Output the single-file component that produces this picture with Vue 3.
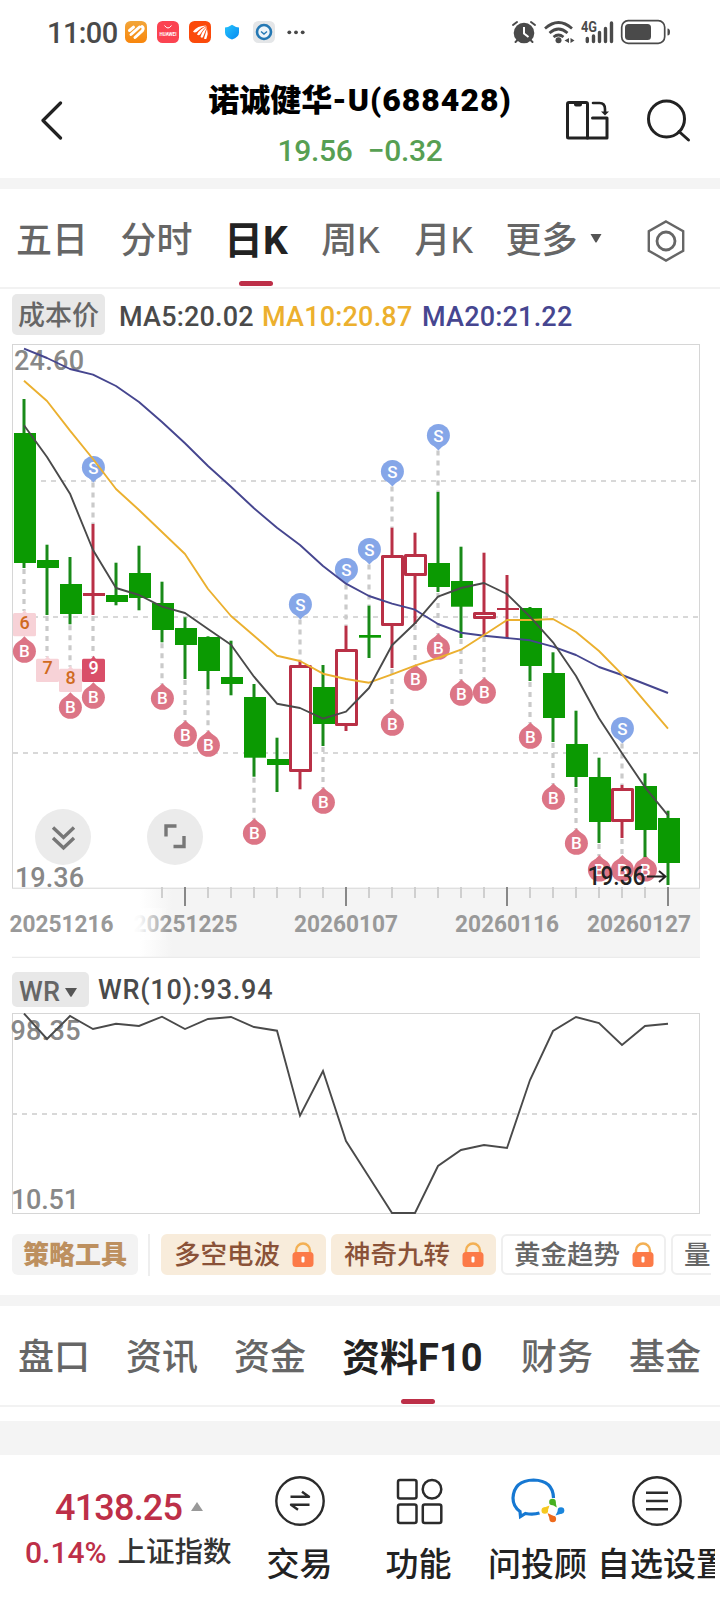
<script setup>
const xAt = (i) => 24 + 23 * i

// kind, high, body top, body bottom, low
const candles = [
  ['g', 399, 433, 563, 568], ['g', 544.7, 560, 568, 615], ['g', 557, 584, 614, 624.3],
  ['c', 524, 593, 596, 615], ['g', 562.7, 595, 602, 605.3], ['g', 545.7, 573, 598, 610.3],
  ['g', 581.7, 603, 630, 642.3], ['g', 617.3, 628, 645, 679], ['g', 636.3, 637, 671, 689.3],
  ['g', 640.7, 677, 684, 695.3], ['g', 684, 697, 757.7, 776.7], ['g', 737.7, 759, 765, 792],
  ['r', 661, 665, 772, 789.3], ['g', 665, 687, 724, 746], ['r', 625.7, 649, 726, 731],
  ['g', 605.7, 635, 637.7, 658], ['r', 527.7, 555, 626, 668], ['r', 532.7, 554, 576, 624],
  ['g', 492, 563, 587, 592], ['g', 546.7, 581, 606.7, 638], ['r', 552.7, 612, 619, 636],
  ['c', 575, 608, 610, 638], ['g', 607, 608, 666, 681], ['g', 652.3, 673, 718, 742],
  ['g', 710.7, 744, 777, 787], ['g', 757.7, 777, 822, 843], ['r', 785, 788, 822, 838],
  ['g', 773.3, 786, 830, 857], ['g', 810.7, 818, 863, 885],
].map(([kind, high, top, bottom, low], i) => ({ kind, high, top, bottom, low, x: xAt(i) }))

const ma5 = [425.3, 457, 493.7, 550, 588, 595, 606.7, 613, 629, 644.7, 676.7, 703.7, 708, 718.7, 711.7, 688, 645.3, 623.3, 596.7, 588, 583, 594, 616.7, 642.3, 676, 718.3, 753.3, 787.3, 815.3]
const ma10 = [380.7, 401, 430.7, 459, 489, 510, 532, 554, 589, 616, 635.7, 655.7, 661, 673.7, 679, 682.7, 674.3, 665.7, 658, 649.7, 635, 620, 620, 619, 632, 651, 674.3, 701.7, 728.7]
const ma20 = [348.7, 358, 369, 374.7, 386, 402, 422, 443.3, 466, 486.7, 508.3, 527.7, 545, 566, 583.7, 596, 603.7, 609.7, 624, 632.7, 635.7, 638, 640.3, 646.7, 655, 667, 675, 684, 693]
const wr = [1013.5, 1039, 1016, 1029, 1023.7, 1026, 1016.7, 1029, 1019, 1017, 1027, 1030.7, 1115.7, 1071, 1141, 1177, 1213, 1213, 1166, 1150, 1145, 1148, 1080, 1031, 1017, 1023, 1045, 1026, 1023.7]
const line = (ys) => ys.map((y, i) => `${xAt(i)},${y}`).join(' ')

const buys = [[0, 651.3], [2, 707.3], [3, 697.3], [6, 698.3], [7, 735.3], [8, 745.3], [10, 833.3], [13, 802.3], [16, 724.3], [17, 679.3], [18, 648.3], [19, 694.3], [20, 692.3], [22, 737.3], [23, 798.3], [24, 843.3], [25, 870], [26, 870], [27, 870]]
  .map(([i, y]) => ({ i, y, x: xAt(i) + 0.4 }))
const sells = [[3, 467.5], [12, 604.5], [14, 569.5], [15, 549.5], [16, 471.5], [18, 435.5], [26, 728.5]]
  .map(([i, y]) => ({ i, y, x: xAt(i) + 0.4 }))
const counts = [[0, 6, 613], [1, 7, 658.7], [2, 8, 668.7], [3, 9, 658.7]]
  .map(([i, n, y]) => ({ i, n, y, x: xAt(i) + 0.5 }))
const leads = [
  ...buys.filter((b) => b.i > 3).map((b) => [b.x - 0.4, candles[b.i].low + 1, b.y - 14]),
  ...counts.map((c) => [c.x - 0.5, candles[c.i].low + 1, c.y - 2]),
  ...sells.map((s) => [s.x - 0.4, s.y + 15, candles[s.i].high]),
].filter(([, a, b]) => b > a)

const ticks = candles.map((c, i) => ({ x: c.x, i })).filter((t) => t.i > 5)
const dates = [['20251216', 9.5], ['20251225', 133.5], ['20260107', 294], ['20260116', 455], ['20260127', 587]]

const periods = ['五日', '分时', '日K', '周K', '月K', '更多']
const sections = ['盘口', '资讯', '资金', '资料F10', '财务', '基金']
const tools = [
  { name: '多空电波', hot: true, lock: true },
  { name: '神奇九转', hot: true, lock: true },
  { name: '黄金趋势', lock: true },
  { name: '量能' },
]
</script>

<template>
  <main class="page">
    <div class="status">
      <span class="clock">11:00</span>
      <svg class="apps" width="190" height="26" viewBox="124 19 190 26">
        <defs>
          <linearGradient id="gOr" x1="0" y1="0" x2="0" y2="1"><stop offset="0" stop-color="#f2a63a" /><stop offset="1" stop-color="#f8860c" /></linearGradient>
          <linearGradient id="gBl" x1="0" y1="0" x2="1" y2="1"><stop offset="0" stop-color="#25c3fb" /><stop offset="1" stop-color="#0789f2" /></linearGradient>
        </defs>
        <rect x="125" y="21" width="22" height="22" rx="5.5" fill="url(#gOr)" />
        <g stroke="#fff" stroke-width="3" fill="none" stroke-linecap="round"><path d="M129.500 30.500l4-3.300M131 34.500l8.500-7.500M135 37.500l7.500-7q1.500-2.500-.5-4" /></g>
        <rect x="157" y="21" width="22" height="22" rx="5.500" fill="#fb4351" />
        <path d="M164.500 25.500q3.500 5 7 0" stroke="#fff" fill="none" stroke-width="1" />
        <text x="159.500" y="35.500" font-size="4.600" font-weight="700" fill="#fff" textLength="17">HUAWEI</text>
        <rect x="189" y="21" width="22" height="22" rx="5.500" fill="#fb4a0b" />
        <g fill="#fff">
          <path d="M193 31.500q4-6 13.500-6q-6 2-10 6.500q-2 1-3.500-.5z" /><path d="M197 34.500q3-6 10-8.500q-4.500 4-7 8.500q-1.500 1.500-3 0z" />
          <path d="M200.500 37q1.500-6 6.500-10q-2 5-4 10q-1 1.500-2.500 0z" /><path d="M204 38.500q1.500-5 3-10q1.500 5-.5 10q-1 1-2.500 0z" />
        </g>
        <path d="M232 24.700q4 2.800 7 2.800v5q0 4.500-7 7q-7-2.500-7-7v-5q3 0 7-2.800z" fill="url(#gBl)" />
        <rect x="253" y="21" width="22" height="22" rx="5.500" fill="#e4e6e8" />
        <circle cx="264" cy="32" r="7" fill="#eef5fa" stroke="#2478b4" stroke-width="2.600" />
        <path d="M261 31.500l3 2.500 3-2.500" fill="none" stroke="#2478b4" stroke-width="1.400" />
        <g fill="#484848"><circle cx="289.300" cy="32.300" r="1.900" /><circle cx="296" cy="32.300" r="1.900" /><circle cx="302.700" cy="32.300" r="1.900" /></g>
      </svg>
      <svg class="signals" width="164" height="28" viewBox="508 18 164 28">
        <g fill="none" stroke="#4a4a4a" stroke-width="2" stroke-linecap="round">
          <path d="M513 25l4-3M535 25l-4-3M515.500 42l3-3M532.500 42l-3-3" />
        </g>
        <circle cx="524" cy="33" r="10.300" fill="#4a4a4a" />
        <path d="M524 27v6.500l4.500 3.500" fill="none" stroke="#fff" stroke-width="2" />
        <g fill="none" stroke="#4a4a4a" stroke-width="2.700"><path d="M545 28.500q13.500-12 27 0M549.500 33q9-8 18 0M553.500 37q5-4 10 0" /></g>
        <circle cx="558.500" cy="40.300" r="3" fill="#4a4a4a" />
        <path d="M569 38l-4.500 2.500 4.500 2.500zM570.500 38l4 2.500-4 2.500z" fill="#4a4a4a" />
        <text x="581" y="32" font-size="14" font-weight="700" fill="#4a4a4a" textLength="16" lengthAdjust="spacingAndGlyphs">4G</text>
        <g stroke="#4a4a4a" stroke-width="3.400" stroke-linecap="round"><path d="M587.300 38.500v3M593.500 36v5.500M599.500 32.500v9M605.500 28.500v13M611.500 23v18.500" /></g>
        <rect x="621.700" y="20.700" width="43" height="22.600" rx="6.500" fill="none" stroke="#4a4a4a" stroke-width="1.700" />
        <rect x="625" y="24" width="26" height="16" rx="3.500" fill="#4a4a4a" />
        <path d="M667.500 28.500q2.500 0 2.500 3.500t-2.500 3.500z" fill="#4a4a4a" />
      </svg>
    </div>

    <header class="head">
      <svg class="back" width="24" height="40" viewBox="0 0 24 40"><path d="M20.500 2L3 19.500l17.500 17.500" fill="none" stroke="#222" stroke-width="3.200" stroke-linecap="round" stroke-linejoin="round" /></svg>
      <div class="title">
        <h1>诺诚健华<span class="code">-U(688428)</span></h1>
        <p class="quote"><span>19.56</span><span>−0.32</span></p>
      </div>
      <div class="actions">
        <svg width="44" height="40" viewBox="565 100 44 40">
          <g fill="none" stroke="#222" stroke-width="3" stroke-linejoin="round" stroke-linecap="round">
            <path d="M569 102.500h17q1.500 0 1.500 1.500v34h-19q-1 0-1-1v-33q0-1.500 1.500-1.500z" />
            <path d="M587.500 138h19.500v-20h-14.500" /><path d="M593 103h6.500q5.500 0 5.500 6v3" stroke-width="2.600" />
          </g>
          <path d="M574 103h8v1.500q0 2-2 2h-4q-2 0-2-2zM601 111.500h8l-4 4z" fill="#222" />
        </svg>
        <svg width="46" height="46" viewBox="645 98 46 46"><g fill="none" stroke="#222" stroke-width="3" stroke-linecap="round"><circle cx="666.500" cy="119" r="18" /><path d="M679 131.500l9.500 8.500" /></g></svg>
      </div>
    </header>
    <div class="band top-band"></div>

    <nav class="periods">
      <span v-for="p in periods" :key="p" class="tab" :class="{ on: p === '日K' }">{{ p }}</span>
      <svg class="caret" width="12" height="9" viewBox="0 0 12 9"><path d="M.5 0h11L6.800 8q-.8 1-1.600 0z" fill="#555" /></svg>
      <svg class="gear" width="38" height="42" viewBox="0 0 38 42"><g fill="none" stroke="#666" stroke-width="2.400"><path d="M19 1.500l17.200 9.700v19.500L19 40.500 1.800 30.700V11.200z" /><circle cx="19" cy="21" r="9" stroke-width="2.800" /></g></svg>
    </nav>

    <div class="ma">
      <span class="chip">成本价</span>
      <span class="m5">MA5:20.02</span>
      <span class="m10">MA10:20.87</span>
      <span class="m20">MA20:21.22</span>
    </div>

    <svg class="kline" width="720" height="614" viewBox="0 344 720 614">
      <defs><linearGradient id="fade"><stop offset="0" stop-color="#f4f4f4" stop-opacity="0" /><stop offset="1" stop-color="#f4f4f4" /></linearGradient>
        <linearGradient id="veil"><stop offset="0" stop-color="#fff" /><stop offset=".25" stop-color="#fff" stop-opacity=".95" /><stop offset="1" stop-color="#fff" stop-opacity="0" /></linearGradient></defs>
      <rect x="140" y="888" width="32" height="69" fill="url(#fade)" />
      <rect x="172" y="888" width="528" height="69" fill="#f4f4f4" />
      <path d="M12 957.500H700" stroke="#ebebeb" stroke-width="1.500" />
      <rect x="12.500" y="344.500" width="687" height="543.700" fill="#fff" stroke="#d6d6d6" />
      <path d="M41 481H699M13 617H699M13 753H699" stroke="#d8d8d8" stroke-width="2" stroke-dasharray="5 5" />
      <path v-for="t in ticks" :key="t.i" :d="`M${t.x} 887v${t.i % 7 ? 11 : 19}`" :stroke="t.i % 7 ? '#cfcfcf' : '#888'" stroke-width="2" />
      <text v-for="d in dates" :key="d[0]" :x="d[1]" y="931.500" class="date" :textLength="104" lengthAdjust="spacingAndGlyphs">{{ d[0] }}</text>
      <rect x="130" y="908" width="38" height="32" fill="url(#veil)" />

      <text x="14" y="369.500" class="scale" textLength="70">24.60</text>
      <text x="15" y="886.500" class="scale" textLength="69">19.36</text>

      <g stroke="#cacaca" stroke-width="3.200" stroke-dasharray="5 5"><path v-for="(l, i) in leads" :key="i" :d="`M${l[0]} ${l[1]}V${l[2]}`" /></g>

      <g v-for="c in counts" :key="c.n">
        <path :d="`M${c.x - 3} ${c.y + 1}l3-4 3 4z`" :fill="c.n === 9 ? '#d94e68' : '#f7d2d7'" />
        <rect :x="c.x - 11.500" :y="c.y" width="23" height="23.300" rx="1.500" :fill="c.n === 9 ? '#d94e68' : '#f7d2d7'" />
        <text :x="c.x" :y="c.y + 15.500" class="count" :fill="c.n === 9 ? '#fff' : '#d06a20'">{{ c.n }}</text>
      </g>
      <g v-for="b in buys" :key="b.i">
        <path :d="`M${b.x - 5} ${b.y - 10}l5-5 5 5z`" fill="#dc7586" />
        <circle :cx="b.x" :cy="b.y" r="11.500" fill="#dc7586" />
        <text :x="b.x" :y="b.y + 6" class="mark">B</text>
      </g>
      <g v-for="s in sells" :key="s.i">
        <path :d="`M${s.x - 5} ${s.y + 10}l5 5 5-5z`" fill="#85a6e8" />
        <circle :cx="s.x" :cy="s.y" r="11.500" fill="#85a6e8" />
        <text :x="s.x" :y="s.y + 6" class="mark">S</text>
      </g>

      <g v-for="(c, i) in candles" :key="i">
        <path :d="`M${c.x} ${c.high}V${c.low}`" :stroke="c.kind === 'g' ? '#198a19' : '#b93046'" stroke-width="3" />
        <rect v-if="c.kind === 'r'" :x="c.x - 9.500" :y="c.top + 1.500" width="20" :height="c.bottom - c.top - 3" fill="#fff" stroke="#b93046" stroke-width="3" stroke-linejoin="round" />
        <rect v-else :x="c.x - 10" :y="c.top" width="22" :height="c.bottom - c.top" :fill="c.kind === 'g' ? '#0b9a02' : '#b93046'" />
      </g>
      <g fill="none" stroke-width="1.900" stroke-linejoin="round">
        <polyline :points="line(ma20)" stroke="#46468f" />
        <polyline :points="line(ma10)" stroke="#ebb02f" />
        <polyline :points="line(ma5)" stroke="#4a4a4a" />
      </g>
      <text x="587.500" y="884.500" class="last" textLength="58" lengthAdjust="spacingAndGlyphs">19.36</text>
      <path d="M647 876.500h18.500M659 871l6.500 5.500-6.500 5.500" fill="none" stroke="#222" stroke-width="1.900" />

      <g fill="#ebebeb"><circle cx="63" cy="837" r="28" /><circle cx="175" cy="837" r="28" /></g>
      <path d="M53 827.500l10.500 10 10.500-10M53 838l10.500 10 10.500-10M166 836.500v-10.500h10.500M184 836v10.500h-10.500" fill="none" stroke="#777" stroke-width="3.400" />
    </svg>

    <div class="wr-head">
      <span class="chip wr">WR<svg width="12" height="9" viewBox="0 0 12 9"><path d="M0 0h12L6.800 8.300q-.8 1-1.600 0z" fill="#555" /></svg></span>
      <span class="wr-val">WR(10):93.94</span>
    </div>
    <svg class="wr-chart" width="720" height="202" viewBox="0 1013 720 202">
      <rect x="12.500" y="1013.500" width="687" height="200" fill="#fff" stroke="#d6d6d6" />
      <path d="M12 1114H699" stroke="#d8d8d8" stroke-width="2" stroke-dasharray="5 5" />
      <text x="10.500" y="1039.500" class="scale" textLength="70">98.35</text>
      <text x="11" y="1208.500" class="scale" textLength="68">10.51</text>
      <polyline :points="line(wr)" fill="none" stroke="#4a4a4a" stroke-width="1.900" />
    </svg>

    <div class="tools">
      <span class="tool-title">策略工具</span>
      <i class="rule"></i>
      <div class="tool-list">
        <span v-for="t in tools" :key="t.name" class="tool" :class="{ hot: t.hot }">{{ t.name }}
          <svg v-if="t.lock" width="22" height="26" viewBox="0 0 22 26"><path d="M4 12V8.500a7 7 0 0 1 14 0V12" fill="none" stroke="#f3b054" stroke-width="2.400" /><rect x=".5" y="10" width="21" height="15" rx="3.500" fill="#fc7a48" /><rect x="9.500" y="14.500" width="3" height="6" rx="1" fill="#fff" /></svg>
        </span>
      </div>
    </div>
    <div class="band"></div>

    <nav class="sections">
      <span v-for="s in sections" :key="s" class="tab" :class="{ on: s === '资料F10' }">{{ s }}</span>
    </nav>
    <div class="band low-band"></div>

    <footer class="dock">
      <div class="index">
        <div class="points">4138.25<svg width="12" height="9" viewBox="0 0 12 9"><path d="M6 0l6 9H0z" fill="#999" /></svg></div>
        <div class="change"><b>0.14%</b><span>上证指数</span></div>
      </div>
      <div class="item">
        <svg width="52" height="52" viewBox="0 0 52 52"><g fill="none" stroke="#2b2b2b"><circle cx="26" cy="26" r="23.700" stroke-width="2.400" /><path d="M16.500 21.800h18.500l-7-5M35.500 29.800H17l7 5" stroke-width="2.400" stroke-linejoin="round" /></g></svg>
        <span>交易</span>
      </div>
      <div class="item fn">
        <svg width="52" height="52" viewBox="0 0 52 52"><g fill="none" stroke="#2b2b2b" stroke-width="2.500"><rect x="5" y="5" width="18.500" height="18.500" rx="2" /><circle cx="39" cy="14.300" r="9.300" /><rect x="5" y="29.500" width="18.500" height="18.500" rx="2" /><rect x="29.800" y="29.500" width="18.500" height="18.500" rx="2" /></g></svg>
        <span>功能</span>
      </div>
      <div class="item ask">
        <svg width="56" height="52" viewBox="510 1476 56 52">
          <path d="M553.500 1499q-.5-17.500-20-18q-19.500.5-20.500 18q0 8.500 7 13.500l.500 5 5-3q8 1.300 14-.5" fill="none" stroke="#1678d2" stroke-width="3.200" />
          <g stroke-linejoin="round"><circle cx="552.500" cy="1503" r="3.300" fill="#47b122" /><path d="M549.300 1504l7.500 4.500-1.300-5.500z" fill="#47b122" />
            <circle cx="561" cy="1511.500" r="3.300" fill="#1b86dc" /><path d="M559.500 1508.500l-4 8 6.500-2z" fill="#1b86dc" />
            <circle cx="552.800" cy="1520" r="3.300" fill="#ee6a1c" /><path d="M555.500 1518l-8-4 2.500 7z" fill="#ee6a1c" />
            <circle cx="544.800" cy="1511.500" r="3.300" fill="#f6c81f" /><path d="M547 1514l2.500-7.500-6.500 2.500z" fill="#f6c81f" /></g>
        </svg>
        <span>问投顾</span>
      </div>
      <div class="item more">
        <svg width="52" height="52" viewBox="0 0 52 52"><g fill="none" stroke="#2b2b2b"><circle cx="26" cy="26" r="23.700" stroke-width="2.400" /><path d="M15 17.800h22M15 26h22M15 34.200h22" stroke-width="2.600" /></g></svg>
        <span>自选设置</span>
      </div>
    </footer>
  </main>
</template>

<style>
body { margin: 0; background: #fff; }
</style>

<style scoped>
.page { width: 720px; height: 1600px; overflow: hidden; background: #fff; color: #222; font-family: Roboto, "Noto Sans CJK SC", sans-serif; font-weight: 450; }
.page svg { display: block; flex: none; }
.page span { white-space: nowrap; }
.status { height: 64px; display: flex; align-items: flex-start; box-sizing: border-box; padding: 18px 0 0 47px; }
.clock { width: 77px; font-size: 29px; line-height: 30px; font-weight: 500; color: #4a4a4a; letter-spacing: -0.6px; }
.apps { margin-top: 1px; }
.signals { margin-left: 194px; }
.head { height: 114px; display: flex; align-items: flex-start; }
.back { margin: 37px 0 0 40px; }
.title { width: 320px; margin-left: 136px; text-align: center; }
.title h1 { margin: 17px 0 0; font-size: 31px; line-height: 38px; font-weight: 900; color: #000; white-space: nowrap; }
.code { font-size: 32px; letter-spacing: 1px; }
.quote { margin: 12px 0 0; display: flex; justify-content: center; gap: 15px; font-size: 30px; line-height: 38px; font-weight: 500; color: #579f53; letter-spacing: -0.3px; }
.actions { display: flex; margin: 36px 0 0 45px; gap: 36px; }
.actions svg:last-child { margin-top: -2px; }
.band { height: 11px; background: #f4f4f4; }
.periods { height: 100px; box-sizing: border-box; border-bottom: 2px solid #f2f2f2; display: flex; align-items: flex-start; padding-left: 16px; gap: 32.500px; }
.tab { position: relative; font-size: 36px; line-height: 50px; color: #666; }
.periods .tab { margin-top: 27px; }
.periods .tab.on { font-size: 39px; margin-left: -1px; padding-right: 1px; }
.periods .tab.on + .tab { padding-right: 2px; }
.tab.on { font-size: 38px; font-weight: 700; color: #222; }
.tab.on::after { content: ""; position: absolute; left: 50%; margin-left: -17px; bottom: -20px; width: 34px; height: 5px; border-radius: 3px; background: #bd2f48; }
.caret { margin: 45px 0 0 -20px; }
.gear { margin: 31px 0 0 12px; }
.ma { height: 55px; display: flex; align-items: flex-start; font-size: 27px; line-height: 40px; padding-left: 12px; }
.chip { background: #e8e8e8; border-radius: 5px; color: #666; }
.ma .chip { width: 93px; height: 41px; margin: 5px 14px 0 0; text-align: center; line-height: 41px; box-sizing: border-box; padding-top: 2px; }
.m5, .m10, .m20 { margin-top: 8px; letter-spacing: 0.2px; font-weight: 500; }
.m5 { width: 143px; color: #4a4a4a; }
.m10 { width: 160px; color: #ecb02e; }
.m20 { color: #464690; }
.date { font-size: 24px; font-weight: 700; fill: #999; }
.scale { font-size: 27px; font-weight: 500; fill: #888; }
.last { font-size: 26px; font-weight: 500; fill: #222; }
.mark { font-size: 17px; font-weight: 500; fill: #fff; text-anchor: middle; }
.count { font-size: 18px; font-weight: 500; text-anchor: middle; }
.wr-head { height: 55px; display: flex; align-items: flex-start; padding-left: 12px; font-size: 27px; line-height: 36px; }
.wr { display: flex; align-items: center; width: 77px; height: 35px; margin: 14px 9px 0 0; box-sizing: border-box; padding: 5px 0 0 7px; gap: 5px; letter-spacing: 0.3px; font-weight: 500; }
.wr-val { margin-top: 14px; color: #4a4a4a; letter-spacing: 0.75px; font-weight: 500; }
.tools { height: 80px; box-sizing: border-box; padding: 19px 9px 0 12px; display: flex; align-items: flex-start; }
.tool-title { width: 126px; height: 41px; border-radius: 6px; background: #f3f3f3; text-align: center; font-size: 26px; line-height: 43px; font-weight: 900; color: #bd905f; }
.rule { width: 2px; height: 42px; margin: 0 10.500px 0 10px; background: #eee; }
.tool-list { flex: 1; display: flex; gap: 5px; overflow: hidden; }
.tool { flex: none; height: 41px; width: 165px; box-sizing: border-box; border: 2px solid #efefef; border-radius: 6px; display: flex; align-items: center; padding-left: 11.500px; gap: 12px; font-size: 26.500px; line-height: 37px; color: #666; }
.tool.hot { background: #f8ecdb; border-color: #f8ecdb; color: #8a5238; }
.sections { height: 101px; box-sizing: border-box; border-bottom: 2px solid #f2f2f2; display: flex; align-items: flex-start; padding: 0 0 0 18px; gap: 36px; }
.sections .tab { margin-top: 27px; }
.sections .tab.on { padding-right: 2.500px; }
.sections .tab.on::after { bottom: -21px; margin-left: -13px; }
.low-band { height: 34px; margin-top: 14px; }
.dock { height: 145px; display: flex; align-items: flex-start; }
.index { width: 240px; padding-top: 31px; }
.points { display: flex; align-items: center; gap: 9px; padding-left: 55px; font-size: 36px; line-height: 44px; font-weight: 500; letter-spacing: -0.8px; color: #bd2f48; }
.points svg { margin-top: -3px; }
.change { display: flex; padding-left: 25px; gap: 11px; font-size: 30px; line-height: 46px; color: #bd2f48; }
.change b { font-weight: 500; }
.change span { font-size: 28.500px; color: #333; }
.item { width: 119px; display: flex; flex-direction: column; align-items: center; padding-top: 20px; font-size: 33px; line-height: 44px; color: #222; }
.item span { margin-top: 16px; }
.more { width: 118px; margin-left: 0; align-items: flex-start; overflow: hidden; }
.more svg { margin-left: 34px; }
</style>
